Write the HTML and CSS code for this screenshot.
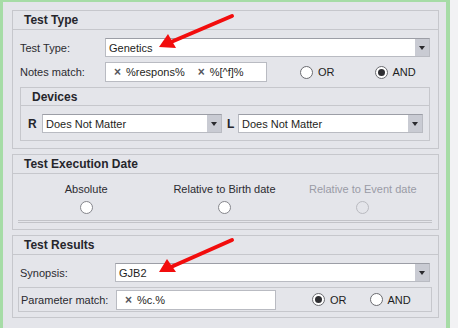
FILE: index.html
```html
<!DOCTYPE html>
<html>
<head>
    <meta charset="UTF-8">
    <title>Test Filter</title>
    <link rel="stylesheet" href="styles.css">
</head>
<body>
<div class="frame">

    <div class="group group-type">
        <div class="group-head">Test Type</div>
        <div class="group-body">
            <div class="row">
                <span class="lbl lbl-type">Test Type:</span>
                <div class="combo combo-wide">
                    <span class="combo-text">Genetics</span>
                    <span class="combo-btn"><span class="caret"></span></span>
                </div>
            </div>
            <div class="row row-notes">
                <span class="lbl lbl-type">Notes match:</span>
                <div class="tokens">
                    <span class="token"><span class="token-x">×</span>%respons%</span>
                    <span class="token"><span class="token-x">×</span>%[^f]%</span>
                </div>
                <label class="radio radio-first"><span class="dot"></span>OR</label>
                <label class="radio radio-and"><span class="dot checked"></span>AND</label>
            </div>

            <div class="subgroup">
                <div class="subgroup-head">Devices</div>
                <div class="subgroup-body">
                    <span class="side side-r">R</span>
                    <div class="combo combo-r">
                        <span class="combo-text">Does Not Matter</span>
                        <span class="combo-btn"><span class="caret"></span></span>
                    </div>
                    <span class="side side-l">L</span>
                    <div class="combo combo-l">
                        <span class="combo-text">Does Not Matter</span>
                        <span class="combo-btn"><span class="caret"></span></span>
                    </div>
                </div>
            </div>
        </div>
    </div>

    <div class="group group-date">
        <div class="group-head">Test Execution Date</div>
        <div class="group-body">
            <div class="choices">
                <div class="choice">
                    <span class="choice-text">Absolute</span>
                    <span class="dot"></span>
                </div>
                <div class="choice">
                    <span class="choice-text">Relative to Birth date</span>
                    <span class="dot"></span>
                </div>
                <div class="choice disabled">
                    <span class="choice-text">Relative to Event date</span>
                    <span class="dot"></span>
                </div>
            </div>
            <div class="double-line"></div>
        </div>
    </div>

    <div class="group group-results">
        <div class="group-head">Test Results</div>
        <div class="group-body">
            <div class="row row-synopsis">
                <span class="lbl lbl-synopsis">Synopsis:</span>
                <div class="combo combo-wide">
                    <span class="combo-text">GJB2</span>
                    <span class="combo-btn"><span class="caret"></span></span>
                </div>
            </div>
            <div class="param-box">
                <span class="lbl lbl-param">Parameter match:</span>
                <div class="tokens tokens-param">
                    <span class="token"><span class="token-x">×</span>%c.%</span>
                </div>
                <label class="radio radio-param"><span class="dot checked"></span>OR</label>
                <label class="radio radio-param-and"><span class="dot"></span>AND</label>
            </div>
        </div>
    </div>

    <!-- red annotation arrows -->
    <svg class="arrows" width="458" height="328" viewBox="0 0 458 328">
        <line x1="232" y1="16" x2="171" y2="42" stroke="#f20d0d" stroke-width="4" stroke-linecap="round"/>
        <polygon points="159,47 168,34 176,48" fill="#f20d0d"/>
        <line x1="232" y1="240" x2="171" y2="267" stroke="#f20d0d" stroke-width="4" stroke-linecap="round"/>
        <polygon points="159,272 167,259 176,272" fill="#f20d0d"/>
    </svg>
</div>
</body>
</html>
```

FILE: styles.css
```css
body {
    margin: 0;
    padding: 0;
    background-color: #f2f2f4;
    font-family: "Liberation Sans", Arial, sans-serif;
    font-size: 11px;
    color: #2b2b30;
}

.frame {
    position: relative;
    width: 434px;
    height: 318px;
    background-color: #e4e5ea;
    border-left: 3px solid #a6dca6;
    border-top: 2px solid #a6dca6;
    border-right: 4px solid #a6dca6;
    padding: 8px 0 0 9px;
    display: flex;
    flex-direction: column;
    gap: 5px;
}

.group {
    width: 425px;
    border: 1px solid #c6c7cc;
}

.group-head {
    height: 18px;
    line-height: 19px;
    border-bottom: 1px solid #c6c7cc;
    padding-left: 11px;
    font-size: 12px;
    font-weight: bold;
    color: #26262c;
}

.group-type .group-body {
    padding: 8px 8px 7px 7px;
}

.row {
    display: flex;
    align-items: center;
}

.row-notes {
    margin-top: 5px;
    height: 20px;
}

.lbl {
    flex: none;
}

.lbl-type {
    width: 85px;
}

.combo {
    display: flex;
    height: 17px;
    background-color: #FFFFFF;
    border: 1px solid #b9bbc2;
    border-top-color: #9c9ea6;
}

.combo-wide {
    flex: 1;
}

.combo-text {
    flex: 1;
    padding-left: 3px;
    line-height: 18px;
    color: #1e1e22;
}

.combo-btn {
    width: 14px;
    background-color: #c9cbd3;
    display: flex;
    align-items: center;
    justify-content: center;
}

.caret {
    width: 0;
    height: 0;
    border-left: 3px solid transparent;
    border-right: 3px solid transparent;
    border-top: 4px solid #2a2a2e;
}

.tokens {
    width: 156px;
    height: 18px;
    background-color: #FFFFFF;
    border: 1px solid #b9bbc2;
    display: flex;
    align-items: center;
    padding-left: 4px;
    gap: 9px;
}

.token {
    color: #1e1e22;
    white-space: nowrap;
}

.token-x {
    font-size: 12px;
    font-weight: bold;
    color: #55565c;
    margin: 0 5px 0 4px;
}

.radio {
    display: flex;
    align-items: center;
    gap: 5px;
    color: #1e1e22;
}

.radio-first {
    margin-left: 33px;
}

.radio-and {
    margin-left: 40px;
}

.dot {
    width: 11px;
    height: 11px;
    border-radius: 50%;
    border: 1px solid #6a6b70;
    background-color: #FFFFFF;
    display: flex;
    align-items: center;
    justify-content: center;
    flex: none;
}

.dot.checked::after {
    content: "";
    width: 7px;
    height: 7px;
    border-radius: 50%;
    background-color: #2f2f33;
}

.subgroup {
    margin-top: 5px;
    border: 1px solid #c6c7cc;
    height: 52px;
}

.subgroup-head {
    height: 17px;
    line-height: 18px;
    border-bottom: 1px solid #c6c7cc;
    padding-left: 11px;
    font-size: 12px;
    font-weight: bold;
    color: #26262c;
}

.subgroup-body {
    display: flex;
    align-items: center;
    padding: 8px 0 0 7px;
}

.side {
    font-size: 12px;
    font-weight: bold;
    color: #26262c;
}

.side-r {
    width: 14px;
}

.combo-r {
    width: 178px;
}

.side-l {
    margin-left: 5px;
    width: 11px;
}

.combo-l {
    width: 183px;
}

.group-date .group-body {
    padding: 8px 6px 6px 4px;
}

.choices {
    display: flex;
    height: 32px;
}

.choice {
    flex: 1;
    display: flex;
    flex-direction: column;
    align-items: center;
    gap: 5px;
}

.choice-text {
    line-height: 14px;
    color: #2b2b30;
}

.group-date .dot {
    width: 11px;
    height: 11px;
    border: 1.5px solid #85868c;
}

.choice.disabled .choice-text {
    color: #9a9ba6;
}

.choice.disabled .dot {
    border-color: #b9bac0;
    background-color: #e4e5ea;
}

.double-line {
    margin: 6px 0 0 1px;
    height: 1px;
    border-top: 1px solid #c2c3c8;
    border-bottom: 1px solid #c2c3c8;
}

.group-results .group-body {
    padding: 8px 6px 5px 5px;
}

.row-synopsis {
    margin: 0 2px 0 2px;
}

.lbl-synopsis {
    width: 95px;
}

.param-box {
    margin-top: 5px;
    height: 23px;
    border: 1px solid #c6c7cc;
    display: flex;
    align-items: center;
    padding-left: 2px;
}

.lbl-param {
    width: 95px;
}

.tokens-param {
    width: 154px;
}

.radio-param {
    margin-left: 36px;
}

.radio-param-and {
    margin-left: 23px;
}

.arrows {
    position: absolute;
    top: -2px;
    left: -3px;
    pointer-events: none;
}
```
